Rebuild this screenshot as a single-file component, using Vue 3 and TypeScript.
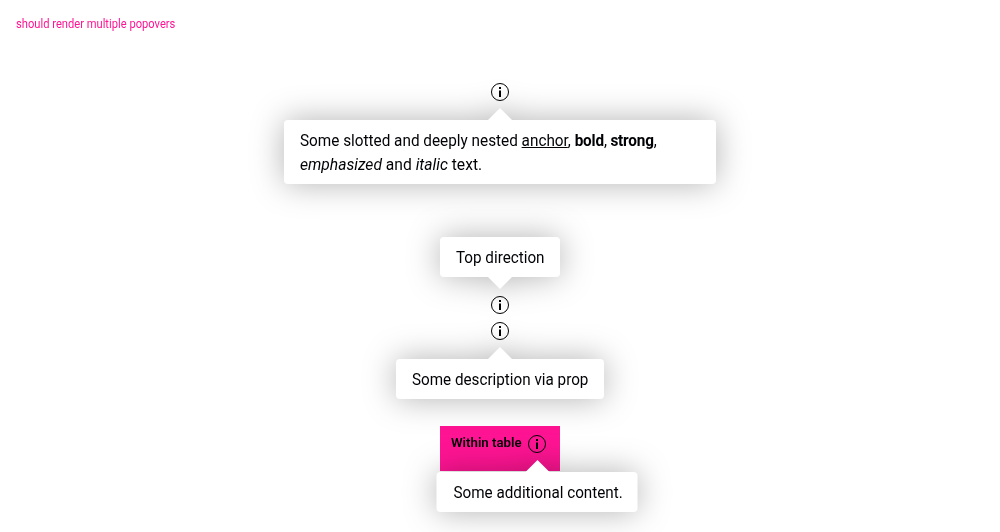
<script setup lang="ts">
import { h } from 'vue'

const InfoIcon = () =>
  h('svg', { viewBox: '0 0 24 24', width: 24, height: 24, 'aria-hidden': 'true', class: 'icon' }, [
    h('circle', { cx: 12, cy: 12, r: 8.5, fill: 'none', stroke: '#010205', 'stroke-width': 1 }),
    h('path', { d: 'M11 7h2v2h-2zM11 10.5h2V17h-2z', fill: '#010205' }),
  ])
</script>

<template>
  <main class="page">
    <p class="title"><span class="text title-text">should render multiple popovers</span></p>
    <section class="demo">
      <div class="trigger">
        <InfoIcon />
        <div class="popover below wide">
          <div class="line"><span class="text first-line">Some slotted and deeply nested <a>anchor</a>, <span class="tight"><b>bold</b>, <strong>strong</strong>,</span></span></div>
          <div class="line"><span class="text second-line"><em>emphasized</em> and <i>italic</i> text.</span></div>
        </div>
      </div>
      <div class="trigger second">
        <InfoIcon />
        <div class="popover above top-box"><span class="text">Top direction</span></div>
      </div>
      <div class="trigger third">
        <InfoIcon />
        <div class="popover below desc-box"><span class="text">Some description via prop</span></div>
      </div>
      <div class="table">
        <span class="label"><span class="text label-text">Within table</span></span>
        <div class="trigger">
          <InfoIcon />
          <div class="popover below table-box"><span class="text">Some additional content.</span></div>
        </div>
      </div>
    </section>
  </main>
</template>

<style>
body {
  margin: 0;
  background: #fff;
  overflow: hidden;
}
.icon {
  display: block;
}
</style>

<style scoped>
.page {
  height: 532px;
  overflow: hidden;
  color: #010205;
  font-family: Roboto, "Liberation Sans", sans-serif;
  font-size: 16px;
  line-height: 24px;
}
.text {
  display: inline-block;
  white-space: nowrap;
  transform: scaleX(0.952);
  transform-origin: 0 50%;
}
.title {
  margin: 0;
  padding: 16px 16px 0;
  height: 64px;
  box-sizing: border-box;
  font-size: 12px;
  line-height: 16px;
  color: #ff1493;
}
.title-text {
  transform: scaleX(0.93);
}
.demo {
  display: flex;
  flex-direction: column;
  align-items: center;
  padding-top: 16px;
}
.trigger {
  position: relative;
  width: 24px;
  height: 24px;
}
.second {
  margin-top: 189px;
}
.third {
  margin-top: 2px;
}
.popover {
  position: absolute;
  left: 50%;
  transform: translateX(-50%);
  box-sizing: border-box;
  padding: 9px 16px 7px;
  border-radius: 4px;
  background: #fff;
  white-space: nowrap;
  filter: drop-shadow(0 0 16px rgba(0, 0, 0, 0.3));
}
.popover::before {
  content: "";
  position: absolute;
  left: 50%;
  margin-left: -12px;
  border: 12px solid transparent;
}
.below {
  top: 40px;
}
.below::before {
  top: -12px;
  border-top-width: 0;
  border-bottom-color: #fff;
}
.above {
  bottom: 40px;
}
.above::before {
  bottom: -12px;
  border-bottom-width: 0;
  border-top-color: #fff;
}
.wide {
  width: 432px;
}
.top-box {
  width: 120px;
}
.desc-box {
  width: 208px;
}
.table-box {
  width: 201px;
  padding-left: 16.5px;
}
.table-box::before {
  left: 100.5px;
}
.line {
  height: 24px;
}
.first-line {
  transform: scaleX(0.957);
}
.second-line {
  transform: scaleX(0.977);
}
.tight {
  letter-spacing: -0.18px;
}
.popover a {
  text-decoration: underline;
}
.table {
  display: flex;
  align-items: flex-start;
  box-sizing: border-box;
  width: 120px;
  height: 45px;
  margin-top: 83px;
  padding: 6px 11px;
  background: #ff1493;
}
.label {
  flex: none;
  width: 74px;
  height: 20px;
  font-size: 13.5px;
  line-height: 21px;
  font-weight: 600;
}
.label-text {
  transform: scaleX(0.98);
}
</style>
